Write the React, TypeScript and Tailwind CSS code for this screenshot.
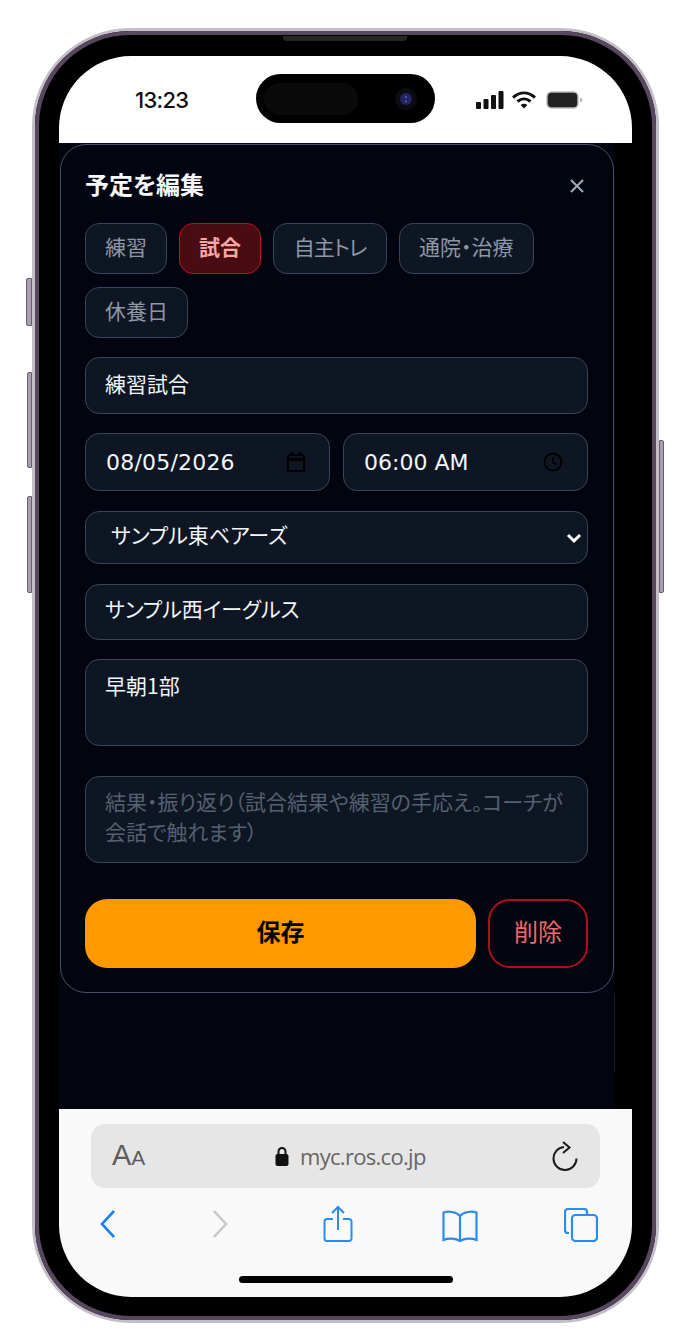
import React from "react";

const jp = "font-['Noto_Sans_CJK_JP','Noto_Sans',sans-serif] [font-feature-settings:'palt']";
const field =
  "block w-full rounded-[14px] border border-[#3a4456] bg-[#0e1623] text-[21px] text-[#f1f5f9] outline-none placeholder:text-[#556070] " +
  jp;

function Chip({ label, active, tight }: { label: string; active?: boolean; tight?: boolean }) {
  return (
    <button
      className={
        "h-[51px] rounded-[14px] pb-[5px] text-[21px] leading-none " +
        jp +
        (tight ? " w-[114px] px-0 tracking-[-1px]" : " px-[19px]") +
        (active
          ? " border-[1.5px] border-[#bd1220] bg-[#4a0c13] font-bold text-[#fca5a5]"
          : " border border-[#3a4456] bg-[#0e1623] text-[#8d97a6]")
      }
    >
      {label}
    </button>
  );
}

function DateField({ value, icon, wide }: { value: string; icon: React.ReactNode; wide?: boolean }) {
  return (
    <div className="flex h-[58px] flex-1 items-center justify-between rounded-[14px] border border-[#3a4456] bg-[#0e1623] pl-[20px] pr-[24px]">
      <span
        className={
          "font-['DejaVu_Sans',sans-serif] text-[22px] text-[#f1f5f9] " + (wide ? "tracking-[0.2px]" : "tracking-normal")
        }
      >
        {value}
      </span>
      {icon}
    </div>
  );
}

export default function App() {
  return (
    <div className="relative h-[1342px] w-[684px] overflow-hidden bg-white pl-[32px] pt-[28px]">
      {/* side buttons */}
      <div className="absolute left-[26px] top-[278px] h-[48px] w-[6px] rounded-l-[2px] border border-[#6b5c72] bg-[#a79fae]" />
      <div className="absolute left-[27px] top-[372px] h-[96px] w-[5px] rounded-l-[2px] border border-[#6b5c72] bg-[#a79fae]" />
      <div className="absolute left-[27px] top-[496px] h-[97px] w-[5px] rounded-l-[2px] border border-[#6b5c72] bg-[#a79fae]" />
      <div className="absolute left-[659px] top-[440px] h-[153px] w-[5px] rounded-r-[2px] border border-[#6b5c72] bg-[#a79fae]" />

      {/* phone body */}
      <div className="h-[1295px] w-[627px] rounded-[98px] border-[3px] border-[#c4bec8] bg-black">
        <div className="h-full w-full rounded-[95px] border-[4px] border-[#58485f] bg-black pl-[20px] pt-[21px]">
          <div className="absolute left-[283px] top-[36px] h-[5px] w-[124px] rounded-b-[4px] bg-[#26252a]" />
          <div className="flex h-[1241px] w-[573px] flex-col overflow-hidden rounded-[72px] bg-black">
            {/* status bar */}
            <div className="flex h-[87px] shrink-0 items-start bg-white pl-[76px] pt-[18px]">
              <span className="mt-[12px] w-[53px] whitespace-nowrap font-['Inter',sans-serif] text-[22px] font-medium leading-[28px] tracking-[-0.7px] text-[#111]">
                13:23
              </span>
              <div className="ml-[68px] flex h-[49px] w-[179px] items-center justify-between rounded-full bg-black pl-[8px] pr-[17px]">
                <div className="h-[32px] w-[94px] rounded-full bg-[#0a0a0a]" />
                <svg width="24" height="24" viewBox="0 0 24 24">
                  <circle cx="12" cy="12" r="11" fill="#0b0b14" />
                  <circle cx="12" cy="12" r="6" fill="#24245f" />
                  <circle cx="12" cy="10" r="1" fill="#5d62c9" />
                  <circle cx="12" cy="14.5" r="1" fill="#5d62c9" />
                </svg>
              </div>
              <div className="ml-[41px] mt-[17px] flex items-center gap-[7px]">
                <svg width="28" height="18" viewBox="0 0 28 18" fill="#111">
                  <rect x="0" y="11" width="5" height="7" rx="1" />
                  <rect x="7.5" y="8" width="5" height="10" rx="1" />
                  <rect x="15" y="4" width="5" height="14" rx="1" />
                  <rect x="22.5" y="0" width="5" height="18" rx="1" />
                </svg>
                <svg width="26" height="18" viewBox="0 0 26 18" fill="none" stroke="#111" strokeWidth="3">
                  <path d="M2 6.5C9 .5 17 .5 24 6.5" />
                  <path d="M6.5 10.5C10.5 7 15.5 7 19.5 10.5" />
                  <path d="M13 17.5l-3.4-3.6c2-1.600 4.800-1.600 6.800 0z" fill="#111" stroke="none" />
                </svg>
                <svg width="37" height="18" viewBox="0 0 37 18" className="ml-[2px]">
                  <rect x="1" y="1" width="31" height="16" rx="4.5" fill="#222" stroke="#b9b9b9" strokeWidth="1.500" />
                  <path d="M34 6.500c1.600.4 2.500 1.300 2.500 2.500s-.9 2.100-2.500 2.500z" fill="#b9b9b9" />
                </svg>
              </div>
            </div>

            {/* page */}
            <div className="flex h-[966px] shrink-0 bg-black">
              <div className="h-full w-[556px] bg-[#02040f]">
                <div className="ml-[1px] mt-[1px] h-[849px] w-[554px] rounded-[26px] border border-[#454e63] bg-[#02050f] pl-[24px] pr-[25px] pt-[24px]">
                  <div className="flex h-[34px] items-center justify-between pr-[2px]">
                    <h2 className={"pb-[4px] text-[24px] font-bold text-[#f5f7fa] " + jp}>予定を編集</h2>
                    <svg width="16" height="16" viewBox="0 0 16 16" stroke="#a3abb8" strokeWidth="2" className="mr-[1px]">
                      <path d="M2 2l12 12M14 2L2 14" />
                    </svg>
                  </div>

                  <div className="mt-[20px] flex flex-wrap gap-x-[12px] gap-y-[13px]">
                    <Chip label="練習" />
                    <Chip label="試合" active />
                    <Chip label="自主トレ" tight />
                    <Chip label="通院・治療" />
                    <Chip label="休養日" />
                  </div>

                  <input readOnly value="練習試合" className={field + " mt-[19px] h-[57px] px-[19px] pb-[6px]"} />

                  <div className="mt-[19px] flex gap-[13px]">
                    <DateField
                      wide
                      value="08/05/2026"
                      icon={
                        <svg width="18" height="20" viewBox="0 0 18 20" fill="none" stroke="#000" strokeWidth="2">
                          <rect x="1" y="3" width="16" height="16" rx="1.500" />
                          <path d="M1 7.500h16" strokeWidth="3" />
                          <path d="M5 0v4M13 0v4" />
                        </svg>
                      }
                    />
                    <DateField
                      value="06:00 AM"
                      icon={
                        <svg width="20" height="20" viewBox="0 0 20 20" fill="none" stroke="#000" strokeWidth="1.800">
                          <circle cx="10" cy="10" r="8.500" />
                          <path d="M10 5v5.500l3.500 2" />
                        </svg>
                      }
                    />
                  </div>

                  <div className="mt-[20px] flex h-[53px] items-center justify-between rounded-[14px] border border-[#3a4456] bg-[#0e1623] pl-[25px] pr-[5px]">
                    <span className={"pb-[5px] text-[21px] text-[#f1f5f9] " + jp}>サンプル東ベアーズ</span>
                    <svg width="16" height="12" viewBox="0 0 16 12" fill="none" stroke="#fff" strokeWidth="3">
                      <path d="M2 3l6 6 6-6" />
                    </svg>
                  </div>

                  <input readOnly value="サンプル西イーグルス" className={field + " mt-[20px] h-[56px] px-[19px] pb-[8px]"} />

                  <textarea
                    readOnly
                    value="早朝1部"
                    className={field + " mt-[19px] h-[87px] resize-none px-[19px] pt-[10px] leading-[30px]"}
                  />

                  <textarea
                    readOnly
                    placeholder="結果・振り返り（試合結果や練習の手応え。コーチが会話で触れます）"
                    className={field + " mt-[30px] h-[87px] resize-none px-[19px] pt-[9px] leading-[30px]"}
                  />

                  <div className="mt-[36px] flex gap-[12px]">
                    <button className={"h-[69px] flex-1 rounded-[22px] bg-[#ff9900] pb-[6px] text-[24px] font-bold text-black " + jp}>
                      保存
                    </button>
                    <button className={"h-[69px] w-[100px] rounded-[22px] border-2 border-[#b0101c] pb-[6px] text-[24px] text-[#f06a6a] " + jp}>
                      削除
                    </button>
                  </div>
                </div>
                <div className="ml-auto h-[79px] w-px bg-[#1b1f2c]" />
              </div>
            </div>

            {/* browser chrome */}
            <div className="flex-1 bg-[#f9f9f9] px-[32px] pt-[15px]">
              <div className="flex h-[64px] w-[509px] items-center rounded-[14px] bg-[#e6e6e6] pl-[21px] pr-[22px]">
                <span className="flex w-[150px] items-baseline font-['Liberation_Sans',sans-serif] font-light text-[#5c5c5c]">
                  <span className="text-[29px]">A</span>
                  <span className="text-[21px]">A</span>
                </span>
                <svg width="14" height="20" viewBox="0 0 14 20" className="ml-[13px]">
                  <path d="M3.500 9V5.500a3.500 3.500 0 0 1 7 0V9" fill="none" stroke="#111" strokeWidth="2" />
                  <rect x="0.500" y="8" width="13" height="12" rx="2" fill="#111" />
                </svg>
                <span className="ml-[11px] font-['Open_Sans',sans-serif] text-[22px] tracking-[-0.7px] text-[#666]">
                  myc.ros.co.jp
                </span>
                <svg width="26" height="30" viewBox="0 0 26 30" fill="none" stroke="#1a1a1a" strokeWidth="2" className="ml-auto">
                  <path d="M12 6A11.500 11.500 0 1 0 24.500 17.500" />
                  <path d="M11 1l6.500 5.500-6.500 5.500" />
                </svg>
              </div>

              <div className="mt-[16px] flex h-[40px] items-center pl-[8px]">
                <svg width="18" height="30" viewBox="0 0 18 30" fill="none" stroke="#1c84ea" strokeWidth="2.600">
                  <path d="M15 2L3 15l12 13" />
                </svg>
                <svg width="18" height="30" viewBox="0 0 18 30" fill="none" stroke="#c8c8c8" strokeWidth="2.400" className="ml-[94px]">
                  <path d="M3 2l12 13L3 28" />
                </svg>
                <svg width="30" height="38" viewBox="0 0 30 38" fill="none" stroke="#2a8cf0" strokeWidth="2" className="ml-[94px]">
                  <path d="M10 14H4a2.500 2.500 0 0 0-2.500 2.500v17A2.500 2.500 0 0 0 4 36h22a2.500 2.500 0 0 0 2.500-2.500v-17A2.500 2.500 0 0 0 26 14h-6" />
                  <path d="M15 25V2M9 8l6-6 6 6" />
                </svg>
                <svg width="38" height="32" viewBox="0 0 38 32" fill="none" stroke="#2a8cf0" strokeWidth="2.200" className="ml-[88px] mt-[4px]">
                  <path d="M19 6C15 1.500 7 1 2.500 2.500V30C7 28 15 28 19 31c4-3 12-3 16.500-1V2.500C31 1 23 1.500 19 6zM19 6v25" />
                </svg>
                <svg width="34" height="34" viewBox="0 0 34 34" fill="none" stroke="#2a8cf0" strokeWidth="2.200" className="ml-[85px] mt-[2px]">
                  <path d="M5 25H4a3 3 0 0 1-3-3V4a3 3 0 0 1 3-3h16a3 3 0 0 1 3 3v2" />
                  <rect x="8" y="7" width="25" height="26" rx="3.500" />
                </svg>
              </div>

              <div className="ml-[148px] mt-[32px] h-[7px] w-[214px] rounded-full bg-black" />
            </div>
          </div>
        </div>
      </div>
    </div>
  );
}
